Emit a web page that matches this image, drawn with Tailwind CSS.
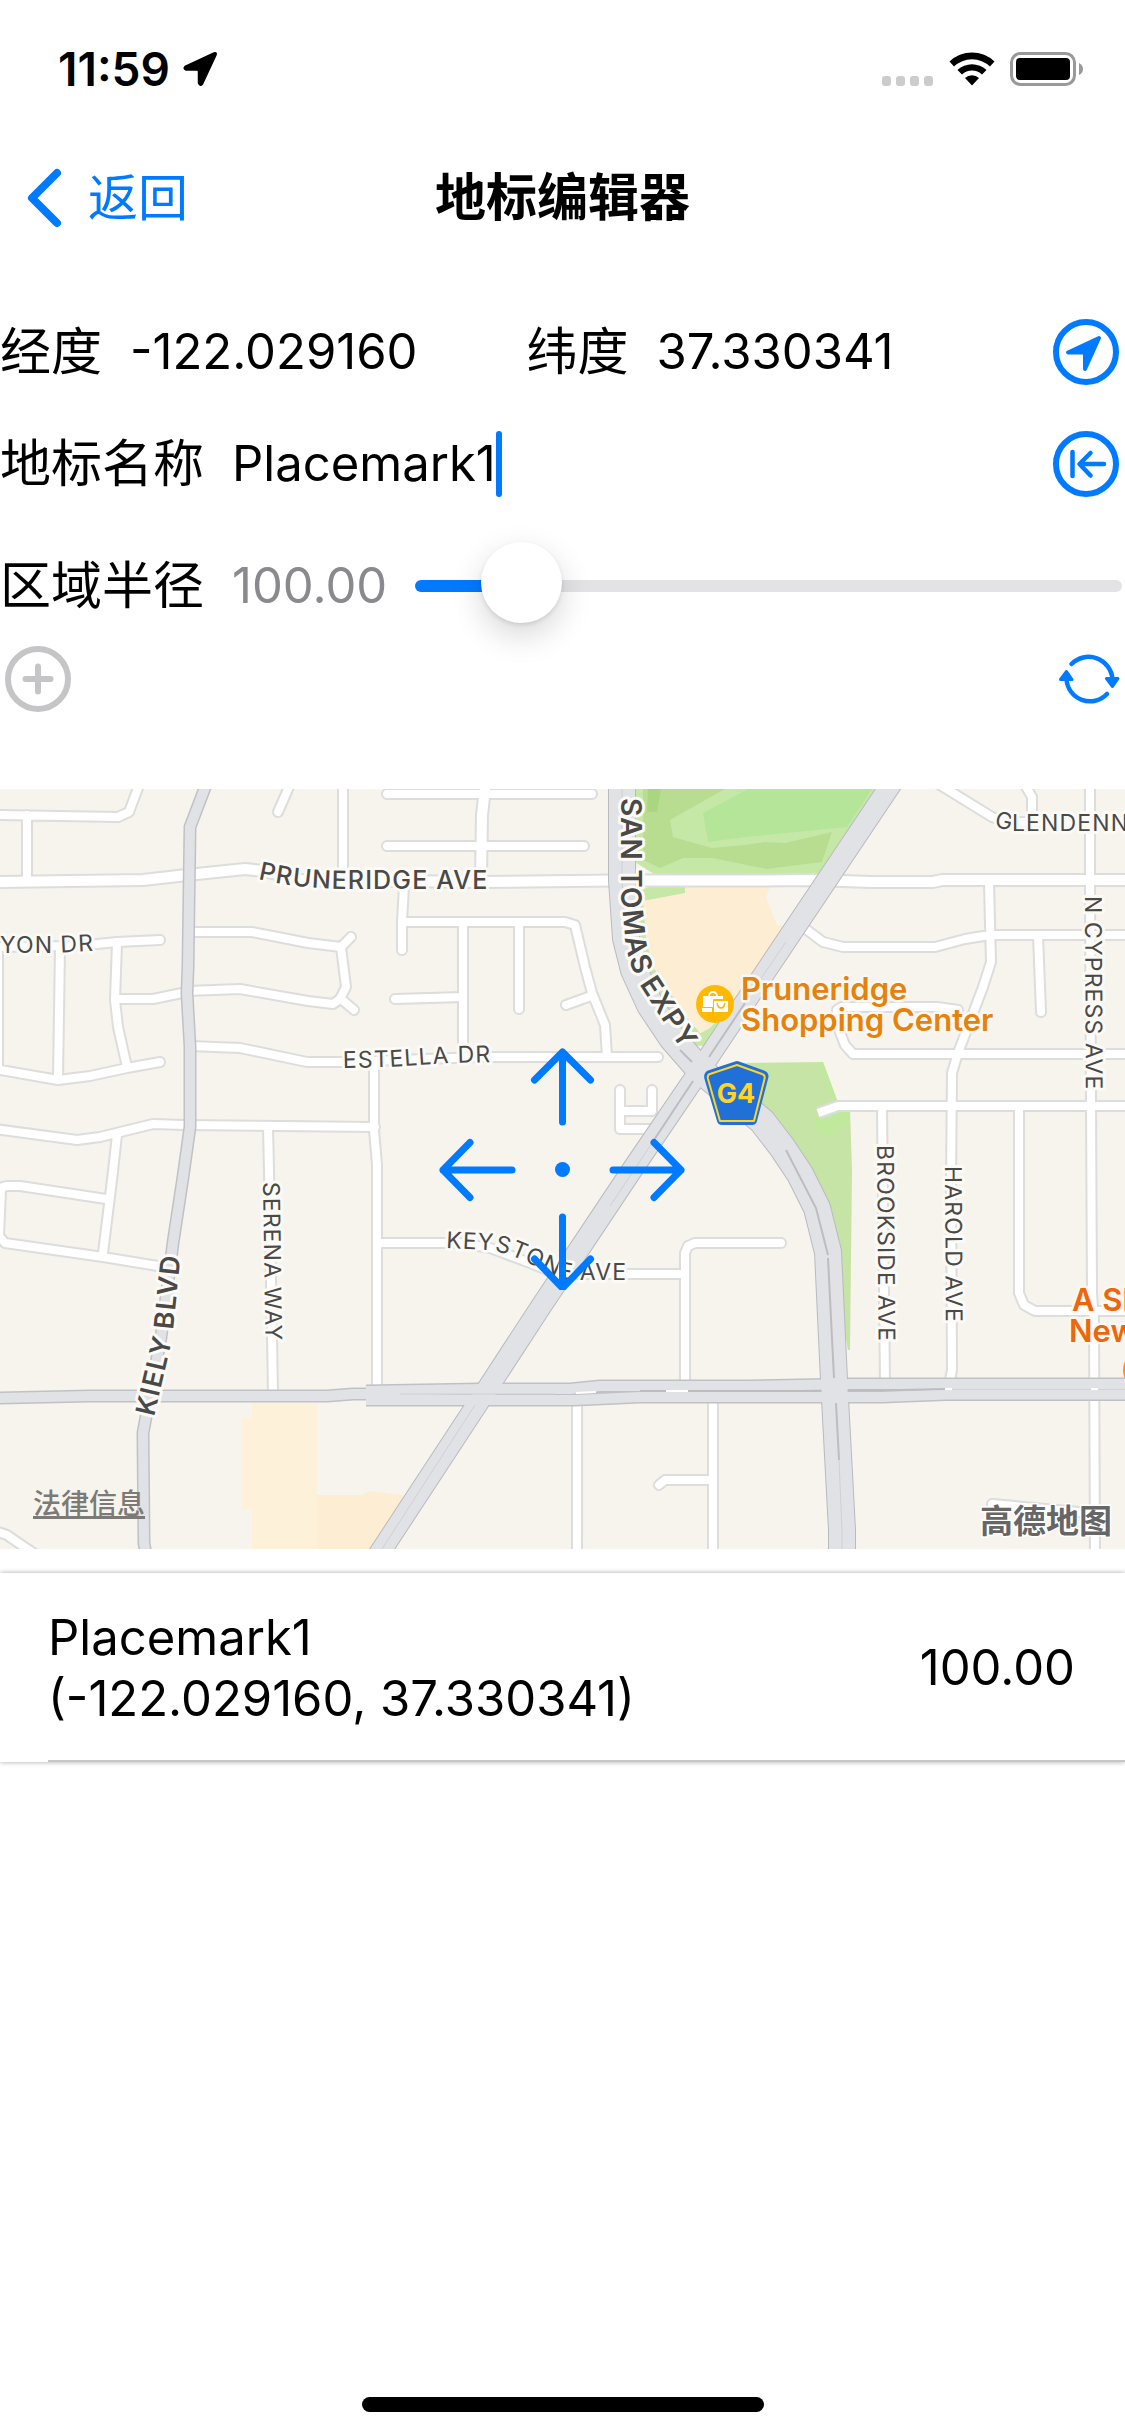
<!DOCTYPE html>
<html lang="zh-CN">
<head>
<meta charset="utf-8">
<meta name="viewport" content="width=device-width, initial-scale=1">
<title>地标编辑器</title>
<script src="https://cdn.jsdelivr.net/npm/@tailwindcss/browser@4"></script>
</head>
<body class="bg-white text-black font-[Inter,'Noto_Sans_CJK_SC',sans-serif] text-[49px] leading-[60px]">
<div class="min-h-screen flex flex-col overflow-hidden">

  <!-- Status bar -->
  <div class="h-[132px] pt-[6px] pl-[58px] pr-10 flex items-center justify-between">
    <div class="flex items-center gap-3">
      <span class="text-[46px] font-semibold">11:59</span>
      <svg class="w-9 h-9" viewBox="0 0 36 36" aria-hidden="true"><path d="M32 2 3 15.500Q1 18 4 19H15Q16.500 19 16.500 20.500V32Q18 36 20.500 33L34 4Q35 1 32 2Z" stroke="#000" stroke-width="1.500" stroke-linejoin="round"/></svg>
    </div>
    <div class="flex items-center gap-[15px]">
      <svg class="w-[52px] h-9" viewBox="0 0 52 36" fill="#ccc" aria-hidden="true"><rect y="25" width="9" height="10" rx="3"/><rect x="14" y="25" width="9" height="10" rx="3"/><rect x="28" y="25" width="9" height="10" rx="3"/><rect x="42" y="25" width="9" height="10" rx="3"/></svg>
      <svg class="w-[46px] h-9" viewBox="0 0 46 36" aria-hidden="true"><path d="M.5 10.500A32.500 32.500 0 0 1 45.500 10.500L41 15.500A26 26 0 0 0 5 15.500ZM8.500 19A21 21 0 0 1 37.500 19L33 23.500A14.500 14.500 0 0 0 13 23.500ZM16 27A10 10 0 0 1 30 27L23 34.500Z"/></svg>
      <svg class="w-[75px] h-9" viewBox="0 0 75 36" aria-hidden="true"><rect x="1.500" y="2.500" width="63" height="31" rx="9" fill="none" stroke="#999" stroke-width="3"/><rect x="6" y="7" width="54" height="22" rx="4"/><path d="M69 12Q73 14 73 18T69 24Z" fill="#999"/></svg>
    </div>
  </div>

  <!-- Navigation bar -->
  <header class="h-[132px] px-6 grid grid-cols-[1fr_auto_1fr] items-center">
    <a href="#" class="flex items-center gap-6 text-[#007aff]">
      <svg class="w-10 h-[60px]" viewBox="0 0 40 60" fill="none" stroke="currentColor" stroke-width="8" stroke-linecap="round" stroke-linejoin="round" aria-hidden="true"><path d="M33 5 8 30 33 55"/></svg>
      <span class="text-[50px]">返回</span>
    </a>
    <h1 class="text-[51px] font-bold">地标编辑器</h1>
  </header>

  <main>
    <form class="pt-8">
      <div class="h-28 flex items-center">
        <label class="flex-1 min-w-0 flex items-center gap-7"><span class="text-[51px]">经度</span><input class="flex-1 min-w-0 outline-none" value="-122.029160"></label>
        <label class="flex-1 min-w-0 flex items-center gap-7"><span class="text-[51px]">纬度</span><input class="flex-1 min-w-0 outline-none" value="37.330341"></label>
        <button type="button" aria-label="定位" class="mr-[6px] text-[#007aff]">
          <svg class="size-[66px]" viewBox="0 0 66 66" fill="none" stroke="currentColor" stroke-width="6"><circle cx="33" cy="33" r="30"/><path d="M46 19 15 33.500H32V50L46 19Z" fill="currentColor" stroke-width="4" stroke-linejoin="round"/></svg>
        </button>
      </div>
      <div class="h-28 flex items-center gap-7">
        <label for="name" class="text-[51px]">地标名称</label>
        <div class="flex-1 min-w-0 flex items-center">
          <input id="name" class="field-sizing-content outline-none" value="Placemark1"><span class="w-[6px] h-[66px] rounded-full bg-[#007aff]"></span>
        </div>
        <button type="button" aria-label="移到此处" class="mr-[6px] text-[#007aff]">
          <svg class="size-[66px]" viewBox="0 0 66 66" fill="none" stroke="currentColor" stroke-width="6" stroke-linecap="round" stroke-linejoin="round"><circle cx="33" cy="33" r="30"/><path d="M19.500 21V45M51 33H27M37.500 22 26.500 33 37.500 44.500" stroke-width="4.500"/></svg>
        </button>
      </div>
      <div class="h-[126px] pt-[6px] flex items-center gap-7 pr-[3px]">
        <label for="radius" class="text-[51px]">区域半径</label>
        <output for="radius" class="text-[#8a8a8e]">100.00</output>
        <input id="radius" type="range" min="0" max="950" value="100" class="flex-1 min-w-0 h-[82px] appearance-none bg-transparent [&::-webkit-slider-runnable-track]:h-3 [&::-webkit-slider-runnable-track]:rounded-full [&::-webkit-slider-runnable-track]:bg-[linear-gradient(to_right,#007aff_15%,#e3e3e5_15%)] [&::-webkit-slider-thumb]:appearance-none [&::-webkit-slider-thumb]:size-[81px] [&::-webkit-slider-thumb]:-mt-[38px] [&::-webkit-slider-thumb]:rounded-full [&::-webkit-slider-thumb]:bg-white [&::-webkit-slider-thumb]:shadow-[0_12px_32px_rgba(0,0,0,0.16),0_2px_4px_rgba(0,0,0,0.1)]">
      </div>
      <div class="px-[5px] flex items-center justify-between">
        <button type="button" disabled aria-label="添加" class="text-[#c5c5c7]">
          <svg class="size-[66px]" viewBox="0 0 66 66" fill="none" stroke="currentColor" stroke-width="6" stroke-linecap="round"><circle cx="33" cy="33" r="30"/><path d="M33 20.500V45.500M20.500 33H45.500"/></svg>
        </button>
        <button type="button" aria-label="刷新" class="text-[#007aff]">
          <svg class="size-[62px]" viewBox="0 0 62 62" fill="none" stroke="currentColor" stroke-width="4.500" stroke-linecap="round" stroke-linejoin="round"><path d="M13.500 16A24 24 0 0 1 54.500 31M49 46A23.500 23.500 0 0 1 8.500 31"/><path d="M48.500 30.500H60L54.500 38.500ZM2.500 31.500H14L8.500 23.500Z" fill="currentColor" stroke-width="3"/></svg>
        </button>
      </div>
    </form>

    <!-- Map -->
    <section class="relative mt-[77px]" aria-label="地图">
      <svg class="block w-full" viewBox="0 789 1125 760" fill="none">
        <rect y="789" width="1125" height="760" fill="#f6f4ec"/>
        <g>
          <path fill="#c5e8a7" d="M635 789H885L823 876H657L635 862Z"/>
          <path fill="#b8dd90" d="M643 789H725L670 820 673 837 712 848 745 845 765 842 785 843 832 832 822 862 767 869 712 858 683 858 660 868 643 860Z"/>
          <path fill="#b4e599" d="M703 813 748 789H872L847 827 745 837 708 842Z"/>
          <path fill="#a9d67f" d="M648 789H661L657 812H647Z"/>
          <path fill="#c5e8a7" d="M630 892 653 886H685V894L643 901 653 960 685 1015 700 1033 720 1020 706 1046 680 1045 630 960Z"/>
          <path fill="#fcedd3" d="M643 901 685 893V886H770L766 898 777 925H785L745 985 710 1028 701 1033 679 1006 653 967 646 940Z"/>
          <path fill="#c5e4a5" d="M720 1066 740 1063 823 1062 837 1100 850 1110 852 1170 850 1350H848L830 1250 800 1170 760 1120Z"/>
          <path fill="#c1e99d" d="M814 1127 818 1113 850 1110V1123L828 1138ZM817 1062H823L837 1100H833Z"/>
          <path fill="#fdf1da" d="M252 1403H317V1549H252V1509H242V1418H252Z"/>
          <path fill="#fcedd3" d="M317 1495H362L370 1491 408 1496 370 1549H317Z"/>
        </g>

        <defs>
          <g id="minor" stroke-linecap="round" stroke-linejoin="round">
            <path d="M-5 815 118 817 129 812 141 780M27 815V882M-5 947 60 946 97 944 117 942 160 940M-2 947V1068M60 948 58 1078M117 943 115 1000 118 1027 127 1067M-5 1069 58 1080 90 1076 127 1068 160 1062M118 999H153L187 992M187 991 240 989 308 1001 333 1004 340 999 346 987 341 947 308 943 252 932H188M341 947 351 937M340 998 354 1010"/>
            <path d="M190 1046 240 1048 307 1062H343L480 1057H658M-5 1129 77 1140 100 1137 153 1124 185 1125 375 1127M117 1135 112 1180 103 1253M268 1128 269 1170 273 1392M374 1067V1130L377 1165V1387M-5 1189 7 1186H20L106 1199M1 1190-1 1236 5 1243 103 1257 170 1268M-5 1531 7 1535 20 1544 35 1554"/>
            <path d="M292 780 278 812M343 780V875M387 794H592M387 846H584M404 886 402 922V950M402 922H565L575 925 585 967 592 993 605 1025 607 1057M463 922V1055M519 922V1009M395 999 463 997M566 1005 591 996M620 1090V1129H660M620 1111H652V1090"/>
            <path d="M377 1243H460L490 1248 530 1263 552 1272 580 1274H685M685 1385V1253L688 1246 695 1243H781M577 1400V1560M713 1400V1560M659 1485 665 1480H713"/>
            <path d="M932 780 992 817 1008 822H1130M1022 780 1032 797V820M1090 780V880L1091 1103 1092 1293 1094 1320 1095 1560M989 883 991 962 983 987 958 1053 952 1073 951 1180 952 1370 949 1385M807 930 823 942 843 947H935L965 939 990 935H1130M1038 935 1041 1012M958 1010 937 1007H842L837 1010 838 1027 845 1045 853 1054H1130M882 1107 885 1385M1019 1106V1293L1024 1305 1035 1311H1130M992 1504 1090 1513"/>
            <path stroke-linecap="butt" d="M818 1113 838 1106H1130"/>
          </g>
          <g id="avenue" stroke-linejoin="round">
            <path d="M0 882 143 880 187 875 245 869 264 871 300 880 480 882 615 880.500H750L815 880 870 882H933L942 880H1130"/>
            <path d="M486 780 482 815 481 878"/>
          </g>
          <g id="lanes" stroke-linejoin="round">
            <path d="M206 785 190 827 188 967 187 993 190 1047V1127L183 1177 173 1243 161 1337 143 1433 144 1543 147 1560M-5 1398 90 1396H327L353 1394H385"/>
            <path d="M366 1391 480 1389H570L600 1386 750 1386 850 1384 1130 1384M366 1400H575L640 1397H882L945 1394.500H1130"/>
          </g>
          <path id="diagonal" d="M894 780 762 977 700 1070 632 1170 540 1308 478 1403 375 1560"/>
          <path id="expressway" stroke-linejoin="round" d="M622 780V880L626 938 634 970 650 1005 672 1038 700 1070 762 1121 782 1147 800 1174 817 1208 828 1252 834 1380 842 1530V1560"/>
        </defs>
        <use href="#minor" stroke="#dcdddc" stroke-width="12"/>
        <use href="#avenue" stroke="#dcdddc" stroke-width="14"/>
        <use href="#minor" stroke="#fff" stroke-width="8"/>
        <use href="#avenue" stroke="#fff" stroke-width="10"/>
        <use href="#lanes" stroke="#c0c1c5" stroke-width="13"/>
        <use href="#diagonal" stroke="#b9babe" stroke-width="22"/>
        <use href="#expressway" stroke="#b9babe" stroke-width="28"/>
        <use href="#lanes" stroke="#e1e2e6" stroke-width="10"/>
        <use href="#expressway" stroke="#e1e2e6" stroke-width="26"/>
        <use href="#diagonal" stroke="#e1e2e6" stroke-width="20"/>
        <path stroke="#bdbdc0" stroke-width="2" d="M709 1057 745 1003M693 1081 652 1143M680 1050 692 1062M828 1258 834 1378M836 1403 839 1460M786 1150 816 1208 828 1255M849 1390H900L945 1389M640 1391H820"/>
        <path stroke="#cfd0d4" d="M839 1460 842 1530V1549M622 789V880L626 938M652 1143 610 1206M475 1405 382 1549M760 980 786 942M400 1394H555"/>
        <path stroke="#fff" stroke-width="2" d="M576 1393 596 1392M666 1391H688M945 1389H952M1091 1389H1098"/>

        <!-- Street names set along their roads -->
        <defs>
          <path id="t1" d="M258 879Q300 889 350 889H540"/>
          <path id="t2" d="M0 953H50L110 950"/>
          <path id="t3" d="M343 1068 390 1067 450 1063 540 1061"/>
          <path id="t4" d="M446 1248 487 1250Q505 1252 522 1260T556 1276Q562 1280 580 1280H680"/>
          <path id="t5" d="M263 1182 266 1380"/>
          <path id="t6" d="M154 1417 172 1340 180 1260 184 1210"/>
          <path id="t7" d="M621 798V895L626 945Q631 972 643 990L681 1049 710 1092"/>
          <path id="t8" d="M1085 896 1086 1130"/>
          <path id="t9" d="M877 1145 879 1390"/>
          <path id="t10" d="M945 1166 946 1360"/>
          <path id="t11" d="M994 827 1013 831H1240"/>
        </defs>
        <g class="font-[Inter,sans-serif] tracking-wider text-[23px] [paint-order:stroke]" fill="#4a4946" stroke="#fbfaf6" stroke-width="6" stroke-linejoin="round">
          <text class="text-[25px] font-medium"><textPath href="#t1">PRUNERIDGE AVE</textPath></text>
          <text><textPath href="#t2">YON DR</textPath></text>
          <text><textPath href="#t3">ESTELLA DR</textPath></text>
          <text><textPath href="#t4">KEYSTONE AVE</textPath></text>
          <text><textPath href="#t5">SERENA WAY</textPath></text>
          <text class="text-[27px] font-semibold"><textPath href="#t6">KIELY BLVD</textPath></text>
          <text class="text-[28px] font-semibold"><textPath href="#t7">SAN TOMAS EXPY</textPath></text>
          <text><textPath href="#t8">N CYPRESS AVE</textPath></text>
          <text><textPath href="#t9">BROOKSIDE AVE</textPath></text>
          <text><textPath href="#t10">HAROLD AVE</textPath></text>
          <text><textPath href="#t11">GLENDENN</textPath></text>
        </g>

        <!-- Points of interest -->
        <g class="font-[Inter,sans-serif] text-[31px] font-semibold [paint-order:stroke]" stroke="#fbf7f2" stroke-width="5" stroke-linejoin="round">
          <text x="741" y="1000" fill="#e5820c">Pruneridge</text>
          <text x="741" y="1031" fill="#e5820c">Shopping Center</text>
          <text x="1072" y="1311" fill="#ee660a">A Sl</text>
          <text x="1069" y="1342" fill="#ee660a">New</text>
        </g>
        <circle cx="1142" cy="1370" r="19" fill="#ff8a1f"/>
        <circle cx="715" cy="1004" r="19" fill="#ffb900"/>
        <path fill="#fff" d="M703 996H708Q709 991 713 991T718 996H723V999H714Q713 999 713 1000V1007H703ZM710 996H716Q716 993 713 993T710 996ZM702 1008H712V1012H702ZM714 1001H728V1012H714Z"/>
        <path stroke="#ffb900" stroke-width="1.500" d="M717 1003Q718 1008 721 1008T725 1003"/>
        <path fill="#2170d8" d="M735 1061.500Q737 1060.500 739 1061.500L764 1070.500Q770 1073 768 1079L757 1121Q756 1125 752 1125H722Q718 1125 717 1121L704.500 1079Q703 1073 708 1070.500Z"/>
        <path stroke="#ffd427" stroke-width="2" stroke-linejoin="round" d="M737 1065 762 1074Q765.500 1075 764.500 1079L754 1121H720L708 1079Q707 1075 710 1074Z"/>
        <text x="736" y="1103" text-anchor="middle" fill="#ffd427" class="font-[Inter,sans-serif] text-[27px] font-bold">G4</text>
      </svg>

      <!-- Pan controls -->
      <div class="absolute inset-0 flex items-center justify-center">
        <div class="grid grid-cols-[repeat(3,85px)] auto-rows-[82px] place-items-center text-[#007aff]">
          <button type="button" aria-label="向北" class="col-start-2"><svg class="size-[78px]" viewBox="0 0 78 78" fill="none" stroke="currentColor" stroke-width="7" stroke-linecap="round" stroke-linejoin="round"><path d="M38.500 74V4M10.500 32 38.500 4 66.500 32"/></svg></button>
          <button type="button" aria-label="向西" class="col-start-1 row-start-2"><svg class="size-[78px]" viewBox="0 0 78 78" fill="none" stroke="currentColor" stroke-width="7" stroke-linecap="round" stroke-linejoin="round"><path d="M73 40H4M31 12.500 4 40 31 67.500"/></svg></button>
          <span class="col-start-2 row-start-2 size-[15px] rounded-full bg-[#007aff]"></span>
          <button type="button" aria-label="向东" class="col-start-3 row-start-2"><svg class="size-[78px]" viewBox="0 0 78 78" fill="none" stroke="currentColor" stroke-width="7" stroke-linecap="round" stroke-linejoin="round"><path d="M4 40H72M45 12.500 72 40 45 67.500"/></svg></button>
          <button type="button" aria-label="向南" class="col-start-2 row-start-3"><svg class="size-[78px]" viewBox="0 0 78 78" fill="none" stroke="currentColor" stroke-width="7" stroke-linecap="round" stroke-linejoin="round"><path d="M38.500 5V76M10.500 47 38.500 76 66.500 47"/></svg></button>
        </div>
      </div>
      <a href="#" class="absolute left-[33px] bottom-[27px] text-[28px] leading-[36px] font-medium text-[#7b7a76] underline decoration-3 underline-offset-2">法律信息</a>
      <span class="absolute right-[13px] bottom-[8px] text-[33px] leading-[40px] font-bold text-[#666] [-webkit-text-stroke:3px_white] [paint-order:stroke]">高德地图</span>
    </section>

    <!-- Saved placemarks -->
    <ul class="mt-6 shadow-[0_0_5px_rgba(0,0,0,0.35)]">
      <li class="pl-12">
        <div class="pr-[50px] pt-[34px] pb-[31px] flex items-center justify-between border-b-2 border-[#c6c6c8]">
          <div class="leading-[61px]"><p>Placemark1</p><p>(-122.029160, 37.330341)</p></div>
          <span>100.00</span>
        </div>
      </li>
    </ul>
  </main>

  <div class="mt-auto mx-auto mb-6 w-[402px] h-[15px] rounded-full bg-black"></div>
</div>
</body>
</html>
